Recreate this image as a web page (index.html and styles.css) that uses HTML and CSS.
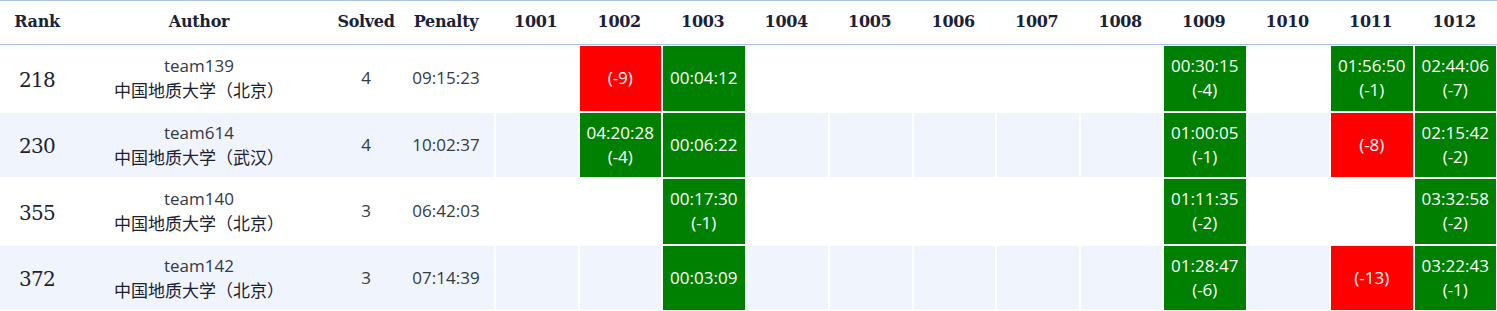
FILE: index.html
```html
<!DOCTYPE html>
<html lang="zh">
<head>
<meta charset="utf-8">
<title>Standings</title>
<link rel="stylesheet" href="styles.css">
</head>
<body>
<div class="board">
  <div class="row head">
    <div class="c rank">Rank</div>
    <div class="c author">Author</div>
    <div class="c solved">Solved</div>
    <div class="c penalty">Penalty</div>
    <div class="c p">1001</div>
    <div class="c p">1002</div>
    <div class="c p">1003</div>
    <div class="c p">1004</div>
    <div class="c p">1005</div>
    <div class="c p">1006</div>
    <div class="c p">1007</div>
    <div class="c p">1008</div>
    <div class="c p">1009</div>
    <div class="c p">1010</div>
    <div class="c p">1011</div>
    <div class="c p">1012</div>
  </div>
  <div class="rows">
    <div class="row">
      <div class="c rank">218</div>
      <div class="c author"><span>team139</span><span>中国地质大学（北京）</span></div>
      <div class="c solved">4</div>
      <div class="c penalty">09:15:23</div>
      <div class="c p"></div>
      <div class="c p bad">(-9)</div>
      <div class="c p ok">00:04:12</div>
      <div class="c p"></div>
      <div class="c p"></div>
      <div class="c p"></div>
      <div class="c p"></div>
      <div class="c p"></div>
      <div class="c p ok"><span>00:30:15</span><span>(-4)</span></div>
      <div class="c p"></div>
      <div class="c p ok"><span>01:56:50</span><span>(-1)</span></div>
      <div class="c p ok"><span>02:44:06</span><span>(-7)</span></div>
    </div>
    <div class="row alt">
      <div class="c rank">230</div>
      <div class="c author"><span>team614</span><span>中国地质大学（武汉）</span></div>
      <div class="c solved">4</div>
      <div class="c penalty">10:02:37</div>
      <div class="c p"></div>
      <div class="c p ok"><span>04:20:28</span><span>(-4)</span></div>
      <div class="c p ok">00:06:22</div>
      <div class="c p"></div>
      <div class="c p"></div>
      <div class="c p"></div>
      <div class="c p"></div>
      <div class="c p"></div>
      <div class="c p ok"><span>01:00:05</span><span>(-1)</span></div>
      <div class="c p"></div>
      <div class="c p bad">(-8)</div>
      <div class="c p ok"><span>02:15:42</span><span>(-2)</span></div>
    </div>
    <div class="row">
      <div class="c rank">355</div>
      <div class="c author"><span>team140</span><span>中国地质大学（北京）</span></div>
      <div class="c solved">3</div>
      <div class="c penalty">06:42:03</div>
      <div class="c p"></div>
      <div class="c p"></div>
      <div class="c p ok"><span>00:17:30</span><span>(-1)</span></div>
      <div class="c p"></div>
      <div class="c p"></div>
      <div class="c p"></div>
      <div class="c p"></div>
      <div class="c p"></div>
      <div class="c p ok"><span>01:11:35</span><span>(-2)</span></div>
      <div class="c p"></div>
      <div class="c p"></div>
      <div class="c p ok"><span>03:32:58</span><span>(-2)</span></div>
    </div>
    <div class="row alt">
      <div class="c rank">372</div>
      <div class="c author"><span>team142</span><span>中国地质大学（北京）</span></div>
      <div class="c solved">3</div>
      <div class="c penalty">07:14:39</div>
      <div class="c p"></div>
      <div class="c p"></div>
      <div class="c p ok">00:03:09</div>
      <div class="c p"></div>
      <div class="c p"></div>
      <div class="c p"></div>
      <div class="c p"></div>
      <div class="c p"></div>
      <div class="c p ok"><span>01:28:47</span><span>(-6)</span></div>
      <div class="c p"></div>
      <div class="c p bad">(-13)</div>
      <div class="c p ok"><span>03:22:43</span><span>(-1)</span></div>
    </div>
  </div>
</div>
</body>
</html>
```
FILE: styles.css
```css
html, body {
  margin: 0;
  padding: 0;
  background: #fff;
}

.board {
  width: 1497px;
  font-family: "Open Sans", "Noto Sans CJK SC", sans-serif;
  font-size: 17px;
  color: #333a44;
}

.row {
  display: grid;
  grid-template-columns: 74px 250px 84px 86px repeat(12, 83.5px);
}

.c {
  display: flex;
  flex-direction: column;
  align-items: center;
  justify-content: center;
  text-align: center;
  line-height: 24px;
  white-space: nowrap;
}

.penalty {
  padding-right: 10px;
}

.head {
  height: 43px;
  border-top: 1px solid #a8bfe8;
  border-bottom: 1px solid #a8bfe8;
}

.head .c {
  font-family: "DejaVu Serif", serif;
  font-weight: 600;
  font-size: 16px;
  letter-spacing: -0.3px;
  color: #1a2238;
  padding-bottom: 1px;
}

.head .penalty {
  padding-right: 10px;
}

.rows {
  display: grid;
  row-gap: 2px;
  padding-top: 1px;
}

.rows .row {
  height: 64.5px;
}

.rows .p {
  border-left: 2px solid #fff;
  background-clip: padding-box;
}

.alt .c {
  background-color: #eff4fd;
}

.rank {
  font-family: "DejaVu Serif", serif;
}

.rows .rank {
  font-size: 20px;
  letter-spacing: -0.8px;
  color: #1c1f33;
  padding-top: 3px;
}

.author span:last-child {
  font-family: "Noto Sans CJK SC", sans-serif;
  color: #1d2030;
}

.rows .c.ok {
  background-color: #008000;
  color: #fff;
}

.rows .c.bad {
  background-color: #ff0000;
  color: #fff;
}
```
